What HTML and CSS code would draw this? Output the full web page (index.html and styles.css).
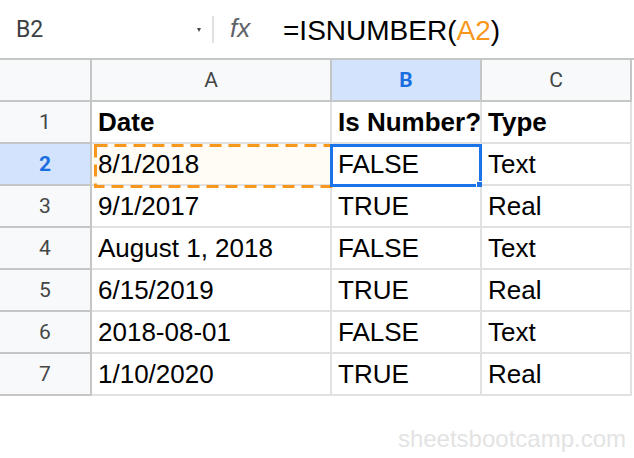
FILE: index.html
```html
<!DOCTYPE html>
<html>
<head>
<meta charset="utf-8">
<link rel="stylesheet" href="styles.css">
</head>
<body>
<div class="bar">
  <div class="namebox"><span class="ref">B2</span><span class="caret"></span></div>
  <div class="sep"></div>
  <div class="fx">fx</div>
  <div class="formula">=ISNUMBER(<span class="arg">A2</span>)</div>
</div>
<div class="sheet">
  <div class="grid">
    <div class="h corner"></div>
    <div class="h col">A</div>
    <div class="h col on">B</div>
    <div class="h col">C</div>

    <div class="h row">1</div>
    <div class="c b">Date</div>
    <div class="c b">Is Number?</div>
    <div class="c b">Type</div>

    <div class="h row on">2</div>
    <div class="c copied">8/1/2018</div>
    <div class="c">FALSE</div>
    <div class="c">Text</div>

    <div class="h row">3</div>
    <div class="c">9/1/2017</div>
    <div class="c">TRUE</div>
    <div class="c">Real</div>

    <div class="h row">4</div>
    <div class="c">August 1, 2018</div>
    <div class="c">FALSE</div>
    <div class="c">Text</div>

    <div class="h row">5</div>
    <div class="c">6/15/2019</div>
    <div class="c">TRUE</div>
    <div class="c">Real</div>

    <div class="h row">6</div>
    <div class="c">2018-08-01</div>
    <div class="c">FALSE</div>
    <div class="c">Text</div>

    <div class="h row">7</div>
    <div class="c">1/10/2020</div>
    <div class="c">TRUE</div>
    <div class="c">Real</div>
  </div>
  <svg class="ants" width="240" height="44" viewBox="0 0 240 44">
    <rect x="1.5" y="1.5" width="250" height="41" fill="none" stroke="#f7981d" stroke-width="3" stroke-dasharray="12 7"/>
  </svg>
  <div class="sel"><span class="handle"></span></div>
</div>
<div class="mark">sheetsbootcamp.com</div>
</body>
</html>
```

FILE: styles.css
```css
html, body {
  margin: 0;
  padding: 0;
  background: #ffffff;
}

body {
  width: 634px;
  height: 458px;
  overflow: hidden;
  font-family: "Liberation Sans", Arial, sans-serif;
}

.bar {
  display: flex;
  align-items: center;
  height: 58px;
}

.namebox {
  box-sizing: border-box;
  width: 212px;
  padding: 0 11px 0 16px;
  display: flex;
  align-items: center;
  font-family: Roboto, "Liberation Sans", sans-serif;
  font-size: 23px;
  color: #3c4043;
}

.caret {
  margin-left: auto;
  width: 0;
  height: 0;
  border-left: 2.5px solid transparent;
  border-right: 2.5px solid transparent;
  border-top: 4px solid #444746;
  margin-top: 1px;
}

.sep {
  width: 2px;
  height: 27px;
  background: #e0e0e0;
}

.fx {
  margin-left: 16px;
  width: 53px;
  font-style: italic;
  font-size: 26px;
  color: #5f6368;
  padding-bottom: 2px;
}

.formula {
  font-size: 28px;
  color: #000000;
  padding-top: 4px;
  white-space: nowrap;
}

.arg {
  color: #f7981d;
}

.sheet {
  position: relative;
  border-top: 2px solid #c4c7c5;
}

.grid {
  display: grid;
  grid-template-columns: 92px 240px 150px 150px;
  grid-template-rows: repeat(8, 42px);
}

.h {
  box-sizing: border-box;
  background: #f8f9fa;
  border-right: 2px solid #c4c7c5;
  border-bottom: 2px solid #c4c7c5;
  display: flex;
  align-items: center;
  justify-content: center;
  font-family: Roboto, "Liberation Sans", sans-serif;
  font-size: 21px;
  color: #444746;
}

.h.on {
  background: #d3e3fd;
  color: #1a6ee0;
  font-weight: 700;
}

.c {
  box-sizing: border-box;
  border-right: 2px solid #e1e1e1;
  border-bottom: 2px solid #e1e1e1;
  display: flex;
  align-items: center;
  padding: 0 6px;
  font-size: 26px;
  color: #000000;
  white-space: nowrap;
  overflow: hidden;
}

.c.b {
  font-weight: 700;
}

.c.copied {
  background: #fffcf5;
}

.ants {
  position: absolute;
  left: 94px;
  top: 84px;
  display: block;
}

.sel {
  position: absolute;
  left: 330px;
  top: 84px;
  width: 152px;
  height: 43px;
  box-sizing: border-box;
  border: 3px solid #1a73e8;
}

.handle {
  position: absolute;
  right: -3px;
  bottom: -3px;
  width: 6px;
  height: 6px;
  box-sizing: border-box;
  background: #1a73e8;
  border-top: 1px solid #ffffff;
  border-left: 1px solid #ffffff;
}

.mark {
  margin-top: 29px;
  padding-right: 8px;
  text-align: right;
  font-size: 24px;
  color: #e3e3e3;
}
```
